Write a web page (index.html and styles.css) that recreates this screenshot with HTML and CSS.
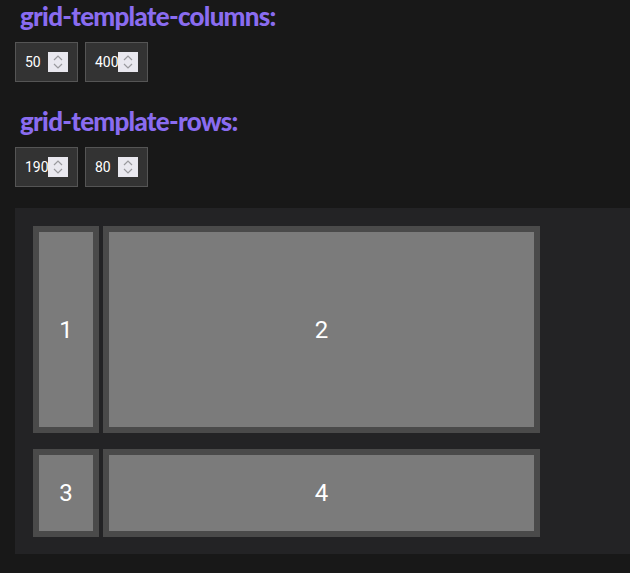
FILE: index.html
```html
<!DOCTYPE html>
<html lang="en">
<head>
    <meta charset="UTF-8">
    <meta name="viewport" content="width=device-width, initial-scale=1.0">
    <title>Grid Playground</title>
    <link rel="stylesheet" href="styles.css">
</head>
<body>
    <div class="controls">
        <h2 class="label">grid-template-columns:</h2>
        <div class="inputs">
            <div class="num-input">50<span class="spin"><svg width="20" height="20" viewBox="0 0 20 20"><path d="M6 8 L10 4 L14 8 M6 12 L10 16 L14 12" fill="none" stroke="#9a9a9e" stroke-width="1.2"/></svg></span></div>
            <div class="num-input">400<span class="spin"><svg width="20" height="20" viewBox="0 0 20 20"><path d="M6 8 L10 4 L14 8 M6 12 L10 16 L14 12" fill="none" stroke="#9a9a9e" stroke-width="1.2"/></svg></span></div>
        </div>
        <h2 class="label">grid-template-rows:</h2>
        <div class="inputs">
            <div class="num-input">190<span class="spin"><svg width="20" height="20" viewBox="0 0 20 20"><path d="M6 8 L10 4 L14 8 M6 12 L10 16 L14 12" fill="none" stroke="#9a9a9e" stroke-width="1.2"/></svg></span></div>
            <div class="num-input">80<span class="spin"><svg width="20" height="20" viewBox="0 0 20 20"><path d="M6 8 L10 4 L14 8 M6 12 L10 16 L14 12" fill="none" stroke="#9a9a9e" stroke-width="1.2"/></svg></span></div>
        </div>
    </div>
    <div class="playground">
        <div class="grid">
            <div class="cell">1</div>
            <div class="cell">2</div>
            <div class="cell">3</div>
            <div class="cell">4</div>
        </div>
    </div>
</body>
</html>
```

FILE: styles.css
```css
body {
    margin: 0;
    padding: 0 0 0 15px;
    background-color: #181818;
    font-family: Roboto, "Liberation Sans", sans-serif;
    color: white;
    overflow: hidden;
}
.label {
    margin: 0 0 10px 5px;
    font-family: Lato, "Liberation Sans", sans-serif;
    font-weight: 900;
    font-size: 26px;
    line-height: 32px;
    letter-spacing: -0.75px;
    color: #8a6cf0;
}
.inputs {
    display: flex;
    gap: 7px;
    margin-bottom: 23px;
}
.inputs:last-child {
    margin-bottom: 21px;
}
.num-input {
    position: relative;
    box-sizing: border-box;
    width: 63px;
    height: 40px;
    padding-left: 9px;
    display: flex;
    align-items: center;
    background-color: #333333;
    border: 1px solid #555555;
    font-size: 14px;
}
.spin {
    position: absolute;
    top: 9px;
    right: 9px;
    width: 20px;
    height: 20px;
    background-color: #e9e8ef;
}
.spin svg {
    display: block;
}
.playground {
    background-color: #232325;
    padding: 18px 18px 17px;
}
.grid {
    display: grid;
    grid-template-columns: 66px 437px;
    grid-template-rows: 207px 88px;
    column-gap: 4px;
    row-gap: 16px;
}
.cell {
    display: flex;
    justify-content: center;
    align-items: center;
    background-color: #7b7b7b;
    border: 6px solid #4a4a4a;
    font-size: 24px;
}
```
